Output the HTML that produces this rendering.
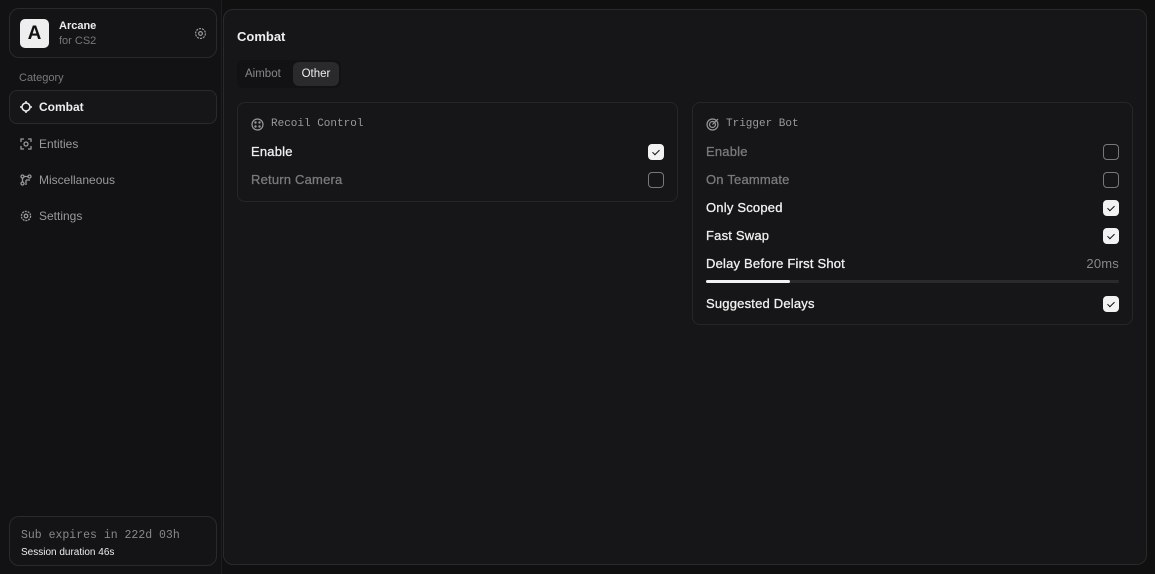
<!DOCTYPE html>
<html><head><style>
*{box-sizing:border-box;margin:0;padding:0}
body{width:1155px;height:574px;background:#0f100f;font-family:"Liberation Sans",sans-serif;overflow:hidden;position:relative;color:#e8e8e8}
.side{position:absolute;left:0;top:0;width:222px;height:574px;background:#121214;border-right:1px solid #1e1e20}
.brand{position:absolute;left:9px;top:8px;width:208px;height:50px;border:1px solid #2a2a2d;border-radius:10px;background:#141416}
.logo{position:absolute;left:10px;top:10px;width:29px;height:29px;background:#eee;border-radius:5px;color:#111;font-weight:bold;font-size:19px;text-align:center;line-height:29px}
.bn{position:absolute;left:49px;top:11px;font-size:11px;font-weight:bold;color:#eee}
.bs{position:absolute;left:49px;top:26px;font-size:11px;color:#777}
.cat{position:absolute;left:19px;top:72px;font-size:11px;color:#7a7a7a}
.nav{position:absolute;left:9px;width:208px;height:34px;font-size:12px;color:#999;padding-left:30px;line-height:34px}
.nav.act{border:1px solid #2a2a2d;border-radius:8px;background:#161618;color:#eee;font-weight:bold;line-height:32px;padding-left:29px}
.nav svg{position:absolute;left:11px;top:11px}
.nav.act svg{left:10px;top:10px}
.sub{position:absolute;left:9px;top:516px;width:208px;height:50px;border:1px solid #2a2a2d;border-radius:10px;background:#141416}
.main{position:absolute;left:223px;top:9px;width:924px;height:556px;background:#161618;border:1px solid #2a2a2d;border-radius:10px}
.tabs{position:absolute;left:13px;top:50px;width:104px;height:28px;background:#121214;border-radius:6px}
.tab{position:absolute;top:2px;height:24px;line-height:24px;font-size:11.5px;color:#888}
.card{position:absolute;border:1px solid #26262a;border-radius:8px;background:#161618}
.ch{position:absolute;left:13px;top:15px;font-family:"Liberation Mono",monospace;font-size:11px;color:#999;padding-left:20px}
.ch svg{position:absolute;left:0;top:0}
.row{position:absolute;left:13px;right:13px;height:20px;font-size:13px;line-height:20px;letter-spacing:.2px}
.cb{position:absolute;right:0;top:2px;width:16px;height:16px;border:1px solid #777;border-radius:4px}
.cb.on{background:#f2f2f2;border-color:#f2f2f2}
.cb.on:after{content:"";position:absolute;left:5px;top:3px;width:3px;height:6px;border:solid #111;border-width:0 1.6px 1.6px 0;transform:rotate(45deg)}
.w{color:#f0f0f0;-webkit-text-stroke:.3px #f0f0f0}
.g{color:#7a7a7a;-webkit-text-stroke:.3px #7a7a7a}
</style></head><body>
<div class="side">
 <div class="brand"><div class="logo">A</div><div class="bn">Arcane</div><div class="bs">for CS2</div>
 <svg style="position:absolute;left:184px;top:18px" width="13" height="13" viewBox="0 0 14 14" fill="none" stroke="#999" stroke-width="1.3"><circle cx="7" cy="7" r="2"/><circle cx="7" cy="7" r="5.3" stroke-dasharray="2.3 1"/></svg></div>
 <div class="cat">Category</div>
 <div class="nav act" style="top:90px"><svg width="12" height="12" viewBox="0 0 12 12" fill="none" stroke="#eee" stroke-width="1.5"><circle cx="6" cy="6" r="4"/><path d="M6 0v2M6 10v2M0 6h2M10 6h2"/></svg>Combat</div>
 <div class="nav" style="top:127px"><svg width="12" height="12" viewBox="0 0 12 12" fill="none" stroke="#999" stroke-width="1.3"><path d="M1 4V1h3M8 1h3v3M11 8v3H8M4 11H1V8"/><circle cx="6" cy="6" r="2"/></svg>Entities</div>
 <div class="nav" style="top:163px"><svg width="12" height="12" viewBox="0 0 12 12" fill="none" stroke="#999" stroke-width="1.3"><circle cx="2.5" cy="2.5" r="1.5"/><circle cx="9.5" cy="2.5" r="1.5"/><circle cx="2.5" cy="9.5" r="1.5"/><path d="M4 2.5h4M2.5 4v4M6 6h4M6 6v5"/></svg>Miscellaneous</div>
 <div class="nav" style="top:199px"><svg width="12" height="12" viewBox="0 0 12 12" fill="none" stroke="#999" stroke-width="1.3"><circle cx="6" cy="6" r="1.8"/><circle cx="6" cy="6" r="4.6" stroke-dasharray="2 0.9"/></svg>Settings</div>
 <div class="sub"><div style="position:absolute;left:11px;top:12px;font-family:'Liberation Mono',monospace;font-size:11.5px;color:#888">Sub expires in 222d 03h</div><div style="position:absolute;left:11px;top:30px;font-size:10px;color:#eee">Session duration 46s</div></div>
</div>
<div class="main">
 <div style="position:absolute;left:13px;top:19px;font-size:13px;font-weight:bold;color:#eee">Combat</div>
 <div class="tabs"><div class="tab" style="left:8px">Aimbot</div><div class="tab" style="left:56px;width:46px;background:#2a2a2d;border-radius:6px;color:#eee;text-align:center">Other</div></div>
 <div class="card" style="left:13px;top:92px;width:441px;height:100px">
  <div class="ch"><svg width="13" height="13" viewBox="0 0 13 13" fill="none" stroke="#999" stroke-width="1.2"><circle cx="6.5" cy="6.5" r="5.5"/><circle cx="4.5" cy="4.5" r=".6"/><circle cx="8.5" cy="4.5" r=".6"/><circle cx="4.5" cy="8.5" r=".6"/><circle cx="8.5" cy="8.5" r=".6"/></svg>Recoil Control</div>
  <div class="row w" style="top:39px">Enable<div class="cb on"></div></div>
  <div class="row g" style="top:67px">Return Camera<div class="cb"></div></div>
 </div>
 <div class="card" style="left:468px;top:92px;width:441px;height:223px">
  <div class="ch"><svg width="13" height="13" viewBox="0 0 13 13" fill="none" stroke="#999" stroke-width="1.2"><circle cx="6.5" cy="6.5" r="5.5"/><circle cx="6.5" cy="6.5" r="3"/><path d="M6.5 6.5L12 1"/></svg>Trigger Bot</div>
  <div class="row g" style="top:39px">Enable<div class="cb"></div></div>
  <div class="row g" style="top:67px">On Teammate<div class="cb"></div></div>
  <div class="row w" style="top:95px">Only Scoped<div class="cb on"></div></div>
  <div class="row w" style="top:123px">Fast Swap<div class="cb on"></div></div>
  <div class="row w" style="top:151px">Delay Before First Shot<span style="position:absolute;right:0;color:#888;-webkit-text-stroke:0">20ms</span></div>
  <div style="position:absolute;left:13px;right:13px;top:177px;height:3px;background:#2a2a2d;border-radius:2px"><div style="width:84px;height:3px;background:#f2f2f2;border-radius:2px"></div></div>
  <div class="row w" style="top:191px">Suggested Delays<div class="cb on"></div></div>
 </div>
</div>
</body></html>
